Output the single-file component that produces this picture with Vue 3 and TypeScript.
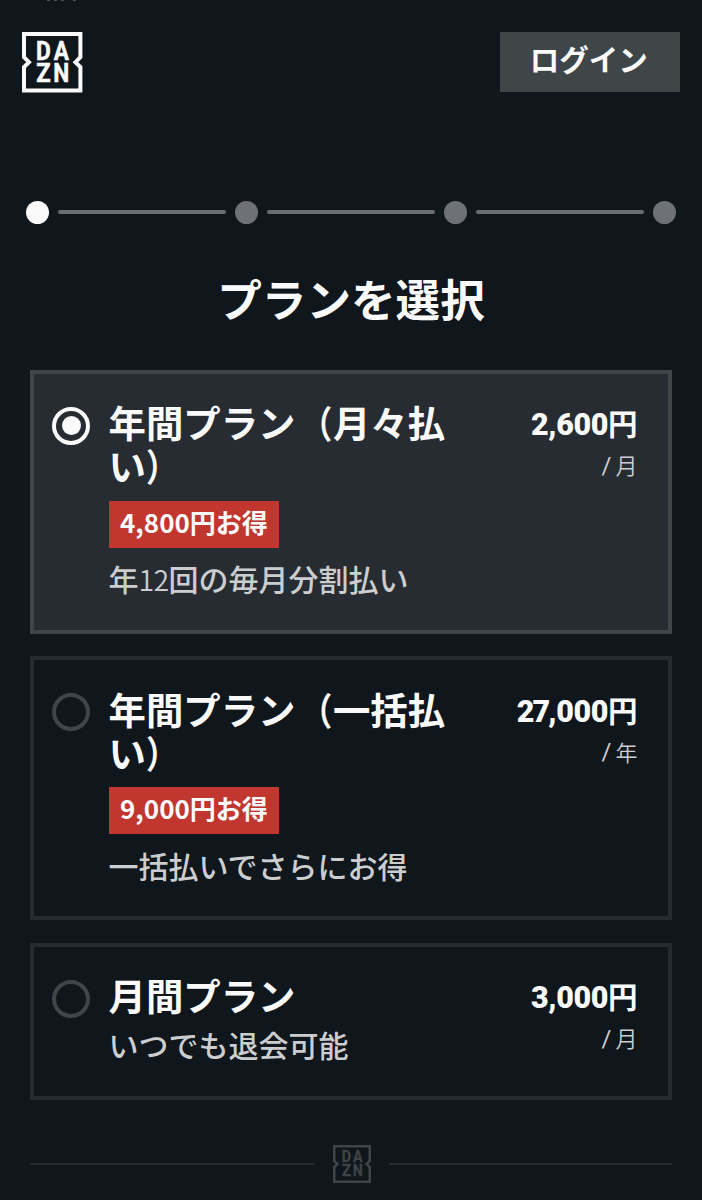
<script setup lang="ts">
import { ref } from 'vue'

interface Plan {
  id: string
  title: string
  note: string
  tail: string
  badge?: string
  desc: { text: string; digits?: boolean }[]
  lead: string
  amount: string
  unit: string
}

const plans: Plan[] = [
  {
    id: 'apm',
    title: '年間プラン',
    note: '月々払',
    tail: 'い',
    badge: '4,800円お得',
    desc: [{ text: '年' }, { text: '12', digits: true }, { text: '回の毎月分割払い' }],
    lead: '',
    amount: '2,600',
    unit: '月',
  },
  {
    id: 'annual',
    title: '年間プラン',
    note: '一括払',
    tail: 'い',
    badge: '9,000円お得',
    desc: [{ text: '一括払いでさらにお得' }],
    lead: '27',
    amount: ',000',
    unit: '年',
  },
  {
    id: 'monthly',
    title: '月間プラン',
    note: '',
    tail: '',
    desc: [{ text: 'いつでも退会可能' }],
    lead: '',
    amount: '3,000',
    unit: '月',
  },
]

const selected = ref('apm')
const steps = [1, 2, 3, 4]
const current = ref(1)

const letters = [
  { c: 'D', x: 14, y: 27.6, w: 14.8 },
  { c: 'A', x: 31.8, y: 27.6, w: 15.2 },
  { c: 'Z', x: 14.3, y: 50, w: 14.4 },
  { c: 'N', x: 31.2, y: 50, w: 16 },
]
const frame = 'M2 2H58.4V25.2L53.4 30.2L58.4 35.2V58.4H2V35.2L7 30.2L2 25.2Z'
</script>

<template>
  <div class="page">
    <div class="cut"><i></i><i></i><i></i><i></i></div>
    <header class="top">
      <svg class="logo" viewBox="0 0 60.4 60.4">
        <path :d="frame" />
        <text v-for="l in letters" :key="l.c" :x="l.x" :y="l.y" :textLength="l.w" lengthAdjust="spacingAndGlyphs">{{ l.c }}</text>
      </svg>
      <button class="login" type="button">ログイン</button>
    </header>

    <div class="steps">
      <template v-for="s in steps" :key="s">
        <span v-if="s > 1" class="bar"></span>
        <span class="dot" :class="{ on: s === current }"></span>
      </template>
    </div>

    <h1>プランを選択</h1>

    <main class="plans">
      <section v-for="p in plans" :key="p.id" class="card" :class="{ active: p.id === selected }" @click="selected = p.id">
        <span class="radio"></span>
        <div class="info">
          <h2>{{ p.title }}<template v-if="p.note"><span class="paren open">（</span>{{ p.note }}{{ p.tail }}<span class="paren close">）</span></template></h2>
          <div v-if="p.badge" class="badge">{{ p.badge }}</div>
          <p class="desc"><span v-for="d in p.desc" :key="d.text" :class="{ digits: d.digits }">{{ d.text }}</span></p>
        </div>
        <div class="price">
          <div class="amount"><b><span v-if="p.lead" class="lead">{{ p.lead }}</span>{{ p.amount }}</b>円</div>
          <div class="unit"><span class="slash">/</span><span>{{ p.unit }}</span></div>
        </div>
      </section>
    </main>

    <footer class="foot">
      <span class="rule"></span>
      <svg class="logo small" viewBox="0 0 60.4 60.4">
        <path :d="frame" />
        <text v-for="l in letters" :key="l.c" :x="l.x" :y="l.y" :textLength="l.w" lengthAdjust="spacingAndGlyphs">{{ l.c }}</text>
      </svg>
      <span class="rule"></span>
    </footer>
  </div>
</template>

<style>
html,
body {
  margin: 0;
  background: #0f161c;
}
</style>

<style scoped>
.page {
  position: relative;
  box-sizing: border-box;
  width: 702px;
  height: 1200px;
  overflow: hidden;
  background: #0f161c;
  color: #fafafa;
  font-family: "Noto Sans CJK JP", sans-serif;
}
.cut {
  position: absolute;
  left: 47px;
  top: 0;
  display: flex;
  gap: 4px;
}
.cut i {
  width: 3px;
  height: 1px;
  background: #4c5257;
}
.cut i:nth-child(3) {
  margin-right: 5px;
}
.top {
  display: flex;
  justify-content: space-between;
  align-items: flex-start;
  padding: 32.3px 22.5px 0 22.3px;
  height: 60.4px;
}
.logo {
  width: 60.4px;
  height: 60.4px;
  display: block;
}
.logo path {
  fill: none;
  stroke: #fafafa;
  stroke-width: 4;
}
.logo text {
  fill: #fafafa;
  stroke: #fafafa;
  stroke-width: 0.5;
  font-family: Roboto, sans-serif;
  font-weight: 700;
  font-size: 25px;
}
.login {
  box-sizing: border-box;
  width: 179.5px;
  height: 60px;
  margin: 0;
  padding: 0 2px 8px 0;
  border: 0;
  background: #3f4648;
  color: #fafafa;
  font: 700 29.5px/52px "Noto Sans CJK JP", sans-serif;
}
.steps {
  display: flex;
  align-items: center;
  justify-content: space-between;
  margin: 108.3px 26px 0;
  height: 23px;
}
.dot {
  width: 23px;
  height: 23px;
  border-radius: 50%;
  background: #6e7175;
}
.dot.on {
  background: #fafafa;
}
.bar {
  width: 168px;
  height: 4px;
  border-radius: 2px;
  background: #6a6e71;
}
h1 {
  margin: 46.5px 0 0;
  height: 56px;
  text-align: center;
  font-size: 44.6px;
  line-height: 56px;
  font-weight: 700;
}
.plans {
  display: flex;
  flex-direction: column;
  gap: 22.5px;
  margin: 43.4px 30px 0;
}
.card {
  box-sizing: border-box;
  display: flex;
  align-items: flex-start;
  height: 264px;
  padding: 27.5px 30.5px 0 18px;
  border: 4px solid #252c30;
}
.card:last-child {
  height: 157px;
}
.card.active {
  background: #262c32;
  border-color: #3f4648;
}
.radio {
  box-sizing: border-box;
  flex: none;
  display: flex;
  align-items: center;
  justify-content: center;
  width: 38px;
  height: 38px;
  margin: 5.5px 18.5px 0 0;
  border: 4px solid #3f4648;
  border-radius: 50%;
}
.active .radio {
  border-color: #fafafa;
}
.active .radio::after {
  content: "";
  width: 19px;
  height: 19px;
  border-radius: 50%;
  background: #fafafa;
}
.info {
  flex: none;
  width: 350px;
}
h2 {
  margin: 0;
  font-size: 37.4px;
  line-height: 43px;
  font-weight: 700;
  line-break: anywhere;
}
.paren {
  display: inline-block;
}
.open {
  transform: scaleX(0.85);
  transform-origin: right center;
}
.close {
  transform: scaleX(0.85);
  transform-origin: left center;
}
.badge {
  box-sizing: border-box;
  width: fit-content;
  height: 47px;
  margin: 13.5px 0 8.5px;
  padding: 0 11.5px;
  background: #c1362f;
  font-size: 26px;
  line-height: 42px;
  font-weight: 700;
}
.desc {
  margin: 0;
  height: 44px;
  font-size: 30px;
  line-height: 44px;
  font-weight: 500;
  color: #cccdcf;
  white-space: nowrap;
}
h2 + .desc {
  margin-top: 5px;
}
.digits {
  font-size: 28.5px;
  font-weight: 350;
  letter-spacing: -0.7px;
}
.price {
  flex: 1;
  text-align: right;
  white-space: nowrap;
}
.amount {
  height: 43px;
  font-size: 29.5px;
  line-height: 43px;
  font-weight: 700;
}
.amount b {
  font-family: Roboto, sans-serif;
  font-size: 30.5px;
  letter-spacing: -0.4px;
}
.lead {
  letter-spacing: -1.9px;
}
.unit {
  display: flex;
  justify-content: flex-end;
  gap: 5px;
  height: 40px;
  font-size: 22px;
  line-height: 40px;
  font-weight: 350;
  color: #cccdcf;
}
.slash {
  padding-top: 1.5px;
  margin-right: -1px;
  font-family: Roboto, sans-serif;
  font-size: 24px;
  font-weight: 400;
}
.foot {
  display: flex;
  align-items: center;
  gap: 18.5px;
  margin: 45px 30px 0;
  height: 38px;
}
.rule {
  flex: 1;
  height: 2px;
  background: #252c31;
}
.small {
  width: 38px;
  height: 38px;
  margin: 0 -0.6px 0 0.6px;
}
.small path {
  stroke: #3f4447;
}
.small text {
  fill: #3f4447;
  stroke: #3f4447;
}
</style>
